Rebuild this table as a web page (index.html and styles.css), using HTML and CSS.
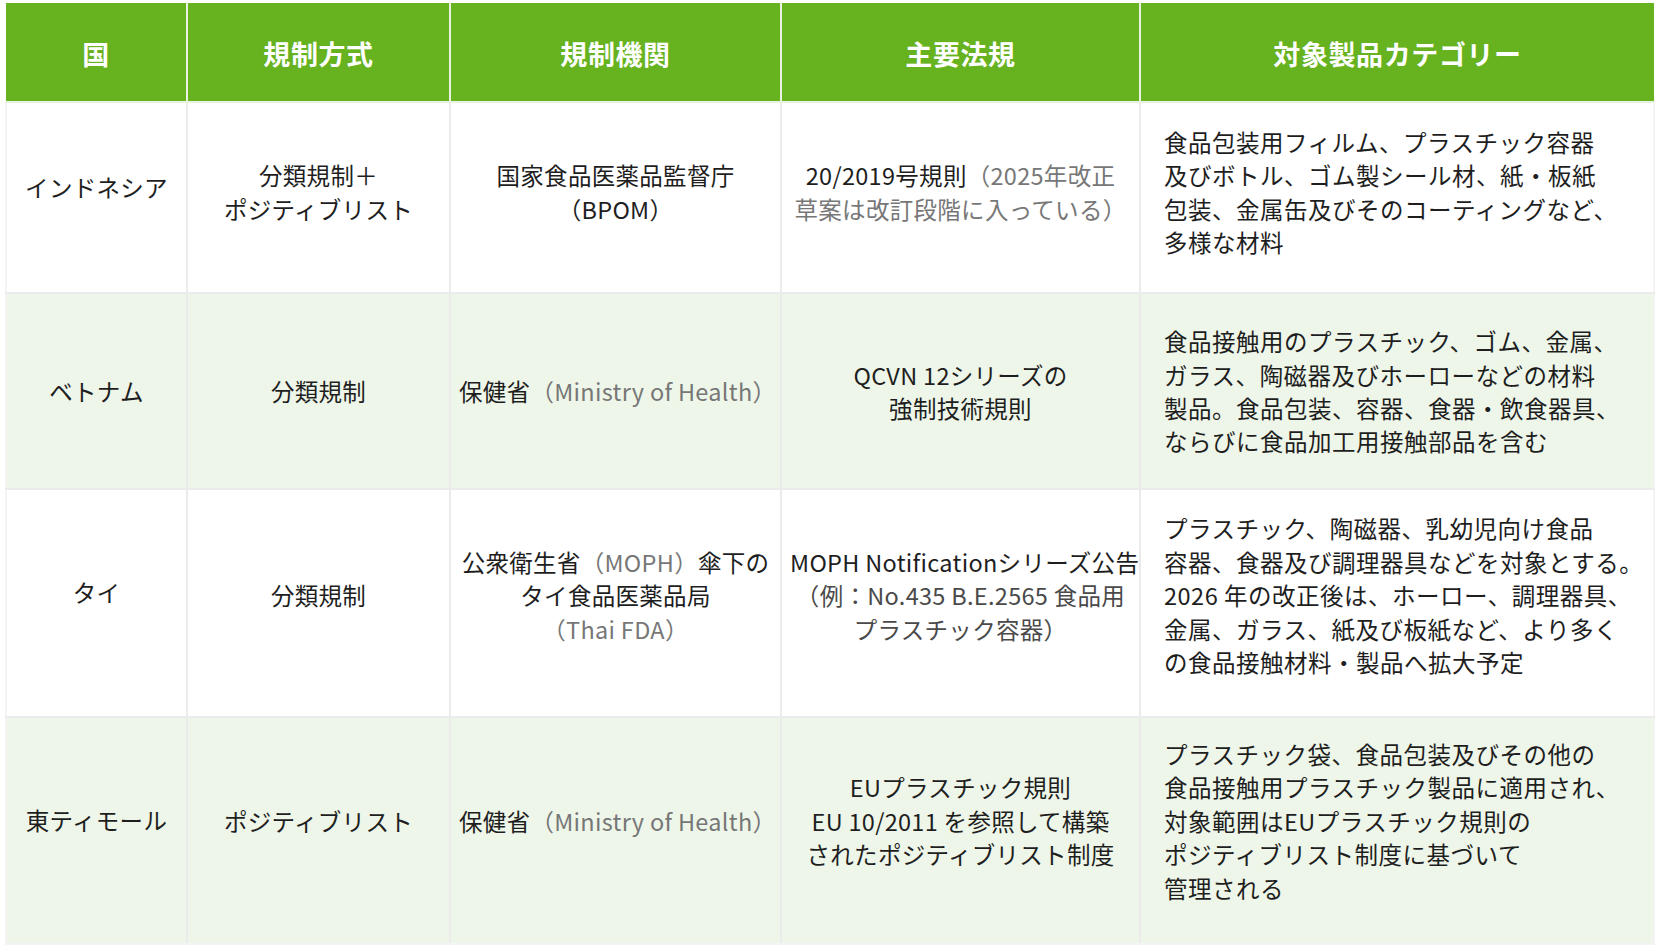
FILE: index.html
```html
<!DOCTYPE html>
<html lang="ja">
<head>
<meta charset="utf-8">
<title>規制比較表</title>
<link rel="stylesheet" href="styles.css">
</head>
<body>
<div class="wrap">
<table class="reg">
  <colgroup>
    <col class="c1"><col class="c2"><col class="c3"><col class="c4"><col class="c5">
  </colgroup>
  <thead>
    <tr class="head">
      <th>国</th>
      <th>規制方式</th>
      <th>規制機関</th>
      <th>主要法規</th>
      <th>対象製品カテゴリー</th>
    </tr>
  </thead>
  <tbody>
    <tr class="r1">
      <td class="country">インドネシア</td>
      <td>分類規制＋<br>ポジティブリスト</td>
      <td>国家食品医薬品監督庁<br>（BPOM）</td>
      <td>20/2019号規則<span class="muted">（2025年改正<br>草案は改訂段階に入っている）</span></td>
      <td class="left">食品包装用フィルム、プラスチック容器<br>及びボトル、ゴム製シール材、紙・板紙<br>包装、金属缶及びそのコーティングなど、<br>多様な材料</td>
    </tr>
    <tr class="r2 alt">
      <td class="country">ベトナム</td>
      <td>分類規制</td>
      <td>保健省<span class="muted">（Ministry of Health）</span></td>
      <td>QCVN 12シリーズの<br>強制技術規則</td>
      <td class="left">食品接触用のプラスチック、ゴム、金属、<br>ガラス、陶磁器及びホーローなどの材料<br>製品。食品包装、容器、食器・飲食器具、<br>ならびに食品加工用接触部品を含む</td>
    </tr>
    <tr class="r3">
      <td class="country">タイ</td>
      <td>分類規制</td>
      <td>公衆衛生省<span class="muted">（MOPH）</span>傘下の<br>タイ食品医薬品局<br><span class="muted">（Thai FDA）</span></td>
      <td>MOPH Notificationシリーズ公告<br><span class="soft">（例：No.435 B.E.2565 食品用<br>プラスチック容器）</span></td>
      <td class="left">プラスチック、陶磁器、乳幼児向け食品<br>容器、食器及び調理器具などを対象とする。<br>2026 年の改正後は、ホーロー、調理器具、<br>金属、ガラス、紙及び板紙など、より多く<br>の食品接触材料・製品へ拡大予定</td>
    </tr>
    <tr class="r4 alt">
      <td class="country">東ティモール</td>
      <td>ポジティブリスト</td>
      <td>保健省<span class="muted">（Ministry of Health）</span></td>
      <td>EUプラスチック規則<br>EU 10/2011 を参照して構築<br>されたポジティブリスト制度</td>
      <td class="left">プラスチック袋、食品包装及びその他の<br>食品接触用プラスチック製品に適用され、<br>対象範囲はEUプラスチック規則の<br>ポジティブリスト制度に基づいて<br>管理される</td>
    </tr>
  </tbody>
</table>
</div>
</body>
</html>
```

FILE: styles.css
```css
html, body {
  margin: 0;
  padding: 0;
  background: #ffffff;
}
body {
  font-family: "Noto Sans CJK JP", "Noto Sans", sans-serif;
  color: #1e1e1e;
}
.wrap {
  padding: 3px 6px 4px 5px;
}
.reg {
  width: 1648px;
  table-layout: fixed;
  border-collapse: collapse;
}
.c1 { width: 181px; }
.c2 { width: 263px; }
.c3 { width: 331px; }
.c4 { width: 359px; }
.c5 { width: 514px; }

.reg th,
.reg td {
  border: 2px solid #ebebeb;
  text-align: center;
  vertical-align: middle;
  white-space: nowrap;
  padding: 0 8px;
}
.reg th {
  background: #66b21f;
  color: #ffffff;
  font-size: 27px;
  font-weight: 700;
  letter-spacing: 0.6px;
  border-color: #e9f1e2;
  border-top: none;
  padding-top: 3px;
}
.reg th:first-child { border-left: none; }
.reg th:last-child { border-right: none; }
.head { height: 99px; }

.reg td {
  font-size: 23.5px;
  line-height: 33.4px;
  letter-spacing: 0.3px;
  background: #ffffff;
}
.reg tr.alt td {
  background: #eef6e9;
}
.reg td.left {
  text-align: left;
  padding-left: 23px;
  letter-spacing: 0.5px;
}
.reg td:first-child { border-left-color: #f4f4f4; }
.reg td:last-child { border-right-color: #f4f4f4; }
.reg tr:last-child td { border-bottom-color: #f4f4f4; }

.r1 { height: 191px; }
.r2 { height: 196px; }
.r3 { height: 228px; }
.r4 { height: 227px; }

.r1 td { padding-bottom: 10px; }
.r2 td { padding-top: 2px; }
.r3 td { padding-bottom: 14px; }
.r4 td { padding-bottom: 18px; }
.r1 td.country,
.r3 td.country,
.r4 td.country { padding-bottom: 20px; }

.muted { color: #777777; }
.soft { color: #4a4a4a; }
```
